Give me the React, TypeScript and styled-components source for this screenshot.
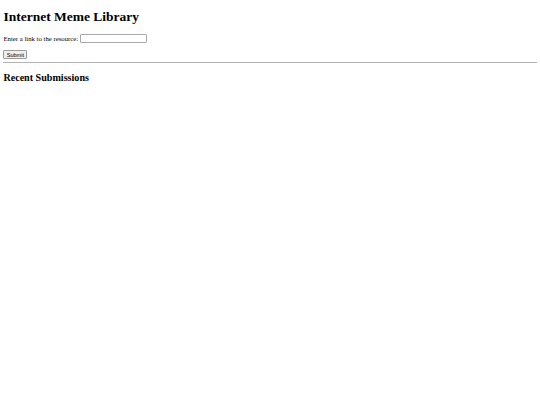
import React from 'react'
import styled, { createGlobalStyle } from 'styled-components'

const GlobalStyle = createGlobalStyle`
  body {
    margin: 3.4px;
    font-family: "Liberation Serif", "Times New Roman", serif;
    font-size: 6.75px;
    color: #000;
    background: #fff;
  }
`

const Title = styled.h1`
  font-size: 13.5px;
  font-weight: bold;
  margin: 6px 0 9.05px;
`

const Form = styled.form`
  margin: 0;
`

const Line = styled.p`
  margin: 6.75px 0;
  display: flex;
  align-items: center;
`

const Label = styled.label`
  font-size: 6.75px;
  margin-right: 1.7px;
`

const LinkInput = styled.input`
  box-sizing: border-box;
  font-family: Arial, "Liberation Sans", sans-serif;
  font-size: 5.6px;
  width: 67px;
  height: 8.9px;
  padding: 0 1px;
  border: 1px solid #a8a8a8;
  border-radius: 1px;
  margin: 0;
`

const SubmitButton = styled.button`
  box-sizing: border-box;
  display: block;
  font-family: Arial, "Liberation Sans", sans-serif;
  font-size: 5.6px;
  height: 8.9px;
  width: 24px;
  padding: 0;
  border: 1px solid #9a9a9a;
  border-radius: 1px;
  background: #efefef;
  color: #000;
  margin: 0;
`

const Rule = styled.hr`
  margin: 3.4px 0;
  border: none;
  border-top: 1px solid #b4b4b4;
`

const Heading = styled.h2`
  font-size: 10.1px;
  font-weight: bold;
  margin: 8.4px 0;
`

export default function App() {
  return (
    <>
      <GlobalStyle />
      <Title>Internet Meme Library</Title>
      <Form onSubmit={e => e.preventDefault()}>
        <Line>
          <Label htmlFor="link">Enter a link to the resource:</Label>
          <LinkInput id="link" type="text" />
        </Line>
        <SubmitButton type="submit">Submit</SubmitButton>
      </Form>
      <Rule />
      <Heading>Recent Submissions</Heading>
    </>
  )
}
